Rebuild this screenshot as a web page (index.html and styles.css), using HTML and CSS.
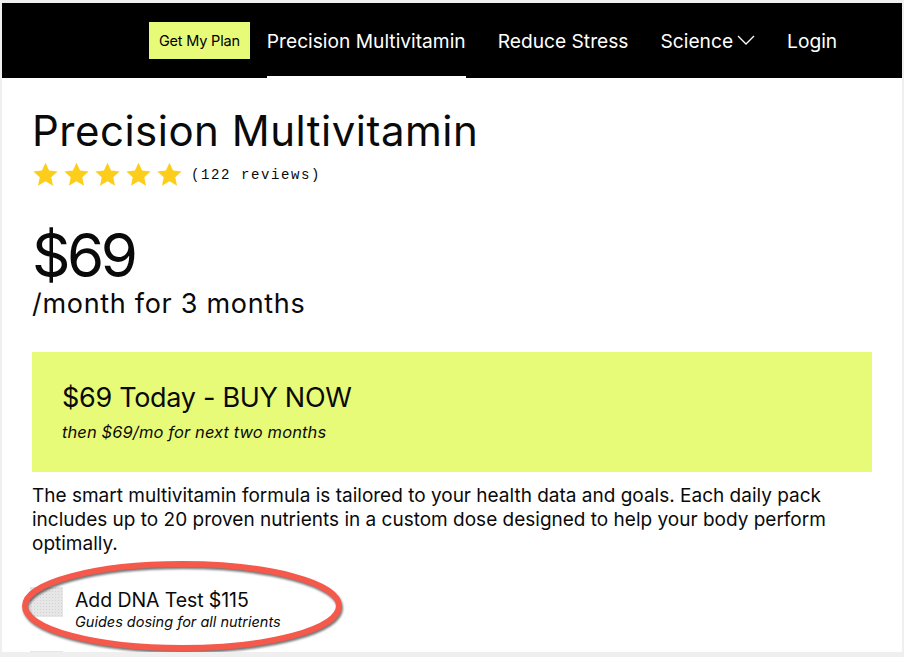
FILE: index.html
```html
<!DOCTYPE html>
<html lang="en">
<head>
    <meta charset="UTF-8">
    <meta name="viewport" content="width=device-width, initial-scale=1.0">
    <title>Precision Multivitamin</title>
    <link rel="stylesheet" href="styles.css">
</head>
<body>
    <div class="page">
        <nav class="topnav">
            <a class="plan-btn" href="#">Get My Plan</a>
            <a class="nav-link active" href="#">Precision Multivitamin</a>
            <a class="nav-link" href="#">Reduce Stress</a>
            <a class="nav-link" href="#">Science
                <svg class="chevron" width="18" height="10" viewBox="0 0 18 10"><path d="M1 1 L9 9 L17 1" fill="none" stroke="#fff" stroke-width="1.3"/></svg>
            </a>
            <a class="nav-link" href="#">Login</a>
        </nav>

        <main class="product">
            <h1>Precision Multivitamin</h1>
            <div class="rating">
                <div class="stars">
                    <!-- 5 estrellas -->
                    <svg viewBox="0 0 24 24"><path d="M12 1.5l3.2 7 7.6.8-5.7 5.1 1.6 7.5L12 18l-6.7 3.9 1.6-7.5L1.2 9.3l7.6-.8z"/></svg>
                    <svg viewBox="0 0 24 24"><path d="M12 1.5l3.2 7 7.6.8-5.7 5.1 1.6 7.5L12 18l-6.7 3.9 1.6-7.5L1.2 9.3l7.6-.8z"/></svg>
                    <svg viewBox="0 0 24 24"><path d="M12 1.5l3.2 7 7.6.8-5.7 5.1 1.6 7.5L12 18l-6.7 3.9 1.6-7.5L1.2 9.3l7.6-.8z"/></svg>
                    <svg viewBox="0 0 24 24"><path d="M12 1.5l3.2 7 7.6.8-5.7 5.1 1.6 7.5L12 18l-6.7 3.9 1.6-7.5L1.2 9.3l7.6-.8z"/></svg>
                    <svg viewBox="0 0 24 24"><path d="M12 1.5l3.2 7 7.6.8-5.7 5.1 1.6 7.5L12 18l-6.7 3.9 1.6-7.5L1.2 9.3l7.6-.8z"/></svg>
                </div>
                <span class="reviews">(122 reviews)</span>
            </div>

            <div class="price">$69</div>
            <div class="price-term">/month for 3 months</div>

            <div class="buy-box">
                <div class="buy-title">$69 Today - BUY NOW</div>
                <div class="buy-sub">then $69/mo for next two months</div>
            </div>

            <p class="desc">The smart multivitamin formula is tailored to your health data and goals. Each daily pack includes up to 20 proven nutrients in a custom dose designed to help your body perform optimally.</p>

            <div class="addon">
                <span class="check"></span>
                <div>
                    <div class="addon-title">Add DNA Test $115</div>
                    <div class="addon-sub">Guides dosing for all nutrients</div>
                </div>
                <svg class="circle-mark" width="340" height="100" viewBox="0 0 340 100">
                    <ellipse cx="168" cy="47" rx="157" ry="42" fill="none" stroke="#f4594b" stroke-width="6"/>
                </svg>
            </div>
            <div class="addon">
                <span class="check"></span>
            </div>
        </main>
    </div>
</body>
</html>
```

FILE: styles.css
```css
body {
    margin: 0;
    background-color: #efefef;
    font-family: Inter, "Liberation Sans", Arial, sans-serif;
    color: #0a0a0a;
}
.page {
    margin: 3px 2px 0 2px;
    height: 649px;
    overflow: hidden;
    background-color: #fff;
}
.topnav {
    display: flex;
    align-items: stretch;
    height: 75px;
    padding-left: 147px;
    background-color: #000;
}
.plan-btn {
    align-self: center;
    display: flex;
    align-items: center;
    height: 37px;
    padding: 0 10px;
    margin-right: 17px;
    background-color: #e8fb79;
    color: #000;
    font-size: 14.5px;
    letter-spacing: -0.2px;
    text-decoration: none;
}
.nav-link {
    display: flex;
    align-items: center;
    gap: 4px;
    margin-right: 32px;
    border-bottom: 2px solid transparent;
    border-top: 2px solid transparent;
    color: #fff;
    font-size: 19.2px;
    letter-spacing: 0;
    text-decoration: none;
}
.nav-link.active {
    border-bottom-color: #fff;
}
.chevron {
    margin-top: -2px;
}
.product {
    position: relative;
    padding: 0 30px 0 30px;
}
h1 {
    margin: 28px 0 0 0;
    font-size: 42px;
    font-weight: 400;
    letter-spacing: 0.5px;
    line-height: 50px;
}
.rating {
    display: flex;
    align-items: center;
    gap: 8px;
    margin-top: 5px;
}
.stars {
    display: flex;
    gap: 4px;
}
.stars svg {
    width: 27px;
    height: 27px;
    fill: #fdcd1b;
}
.reviews {
    font-family: "Liberation Mono", "DejaVu Sans Mono", monospace;
    font-size: 14px;
    letter-spacing: 1.6px;
}
.price {
    margin-top: 36px;
    font-size: 60px;
    line-height: 62px;
    letter-spacing: -3.5px;
}
.price-term {
    margin-top: 2px;
    font-size: 27px;
    line-height: 32px;
    letter-spacing: 0.7px;
}
.buy-box {
    margin-top: 32px;
    height: 120px;
    padding: 28px 30px 0 30px;
    box-sizing: border-box;
    background-color: #e8fb79;
}
.buy-title {
    font-size: 27px;
    letter-spacing: -0.3px;
    line-height: 36px;
}
.buy-sub {
    margin-top: 6px;
    font-size: 16.5px;
    font-style: italic;
    letter-spacing: 0.1px;
}
.desc {
    margin: 12px 0 0 0;
    font-size: 19px;
    line-height: 24px;
    letter-spacing: 0;
}
.addon {
    position: relative;
    display: flex;
    align-items: flex-start;
    gap: 12px;
    margin-top: 31px;
}
.addon + .addon {
    margin-top: 20px;
}
.check {
    width: 33px;
    height: 30px;
    margin-left: -2px;
    background-color: #e6e6e6;
    background-image: radial-gradient(#d2d2d2 0.6px, transparent 0.8px);
    background-size: 3px 3px;
}
.addon-title {
    font-size: 19.5px;
    line-height: 26px;
    letter-spacing: -0.1px;
}
.addon-sub {
    font-size: 14.5px;
    font-style: italic;
    line-height: 18px;
}
.circle-mark {
    position: absolute;
    left: -18px;
    top: -28px;
    filter: drop-shadow(1px 2px 1px rgba(0, 0, 0, 0.55));
}
```
